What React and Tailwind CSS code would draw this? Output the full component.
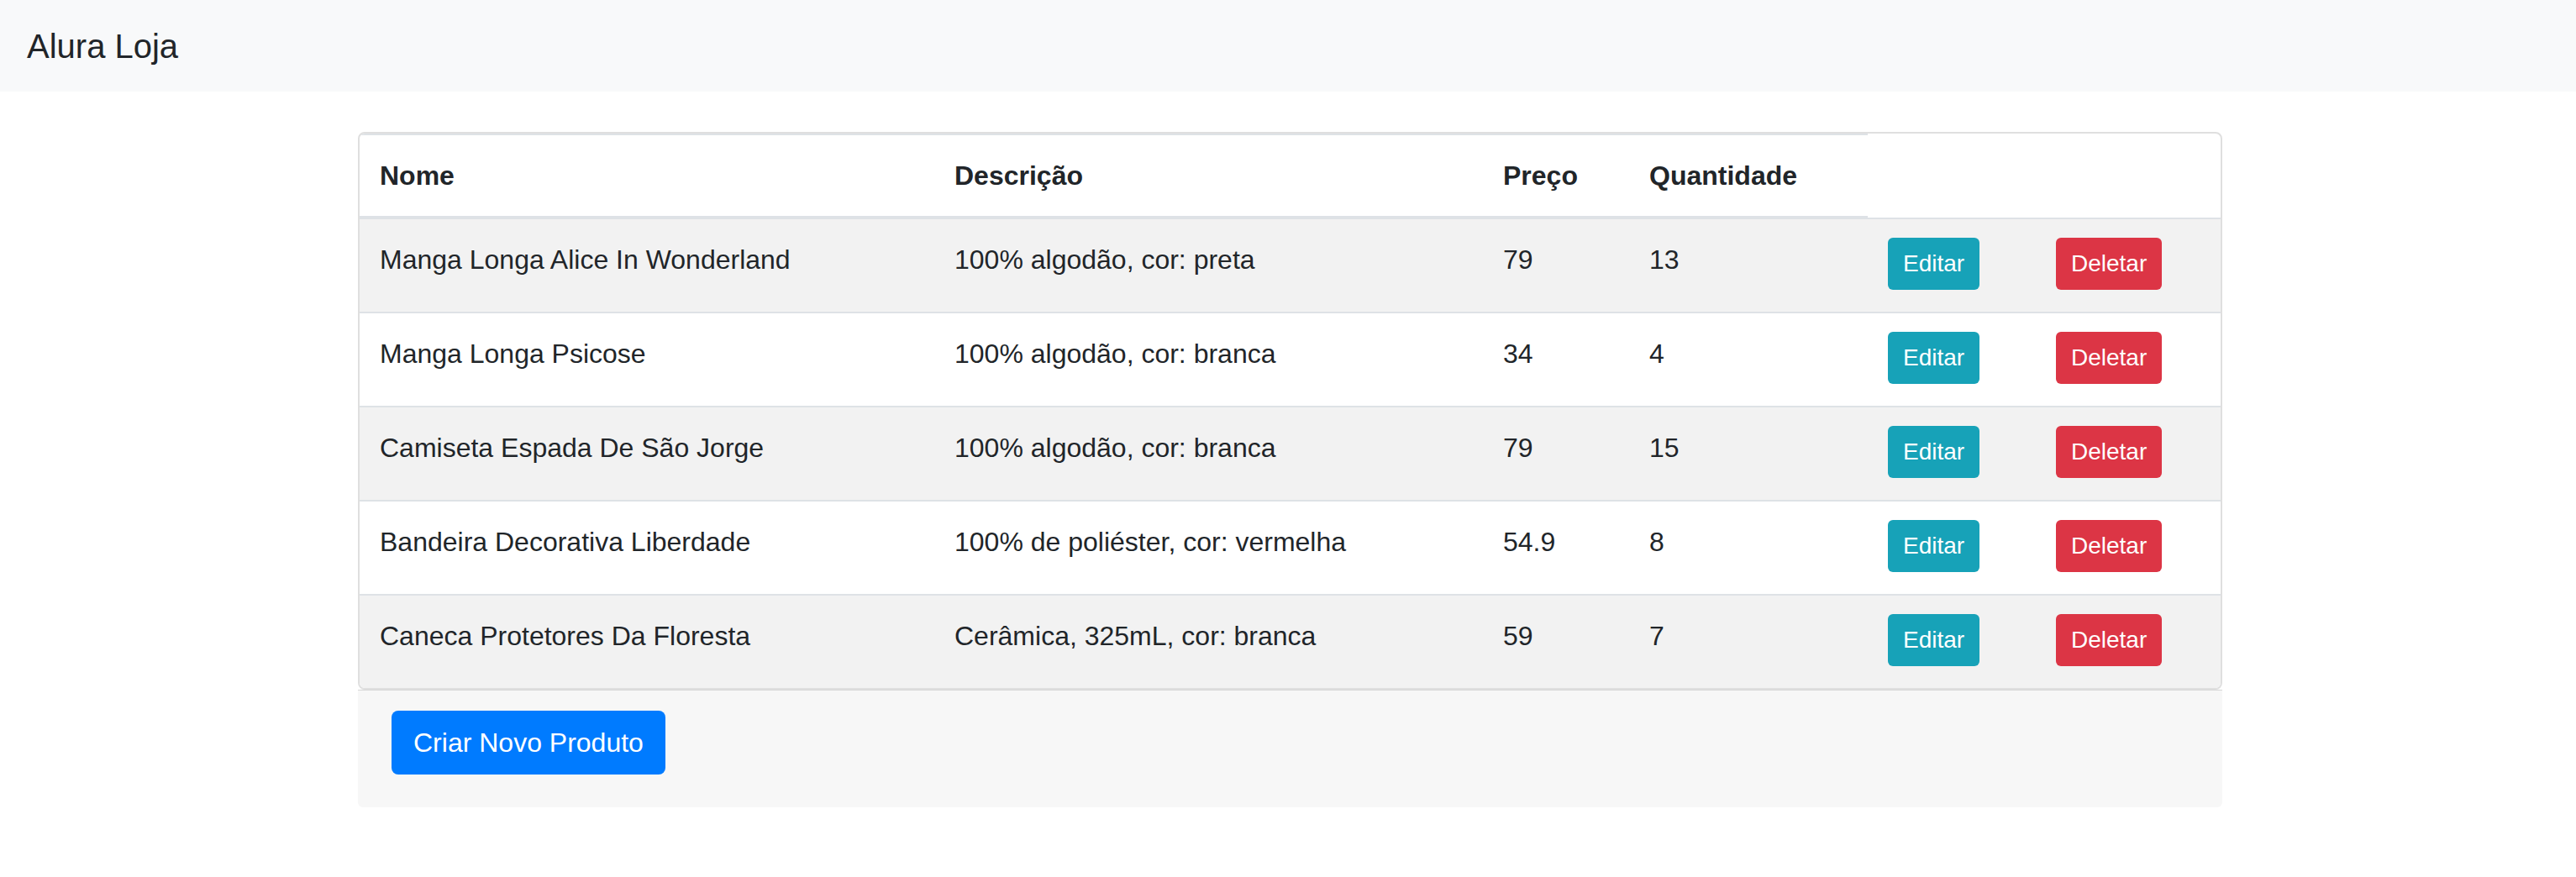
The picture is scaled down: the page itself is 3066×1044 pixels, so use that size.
import React from 'react';

const produtos = [
  { nome: 'Manga Longa Alice In Wonderland', descricao: '100% algodão, cor: preta', preco: '79', quantidade: '13' },
  { nome: 'Manga Longa Psicose', descricao: '100% algodão, cor: branca', preco: '34', quantidade: '4' },
  { nome: 'Camiseta Espada De São Jorge', descricao: '100% algodão, cor: branca', preco: '79', quantidade: '15' },
  { nome: 'Bandeira Decorativa Liberdade', descricao: '100% de poliéster, cor: vermelha', preco: '54.9', quantidade: '8' },
  { nome: 'Caneca Protetores Da Floresta', descricao: 'Cerâmica, 325mL, cor: branca', preco: '59', quantidade: '7' },
];

const cols = 'grid grid-cols-[684px_653px_174px_284px_200px_220px]';

const App = () => {
  return (
    <div className="min-h-screen bg-white text-[#212529] font-['Liberation_Sans',Arial,sans-serif]">
      {/* Navbar */}
      <nav className="h-[109px] bg-[#f8f9fa] flex items-center px-[32px]">
        <span className="text-[40px]">Alura Loja</span>
      </nav>

      <div className="flex justify-center pl-[5px] mt-[48px]">
        <div className="w-[2219px]">
          {/* Tabela */}
          <div className="bg-white border-2 border-[#dfdfdf] rounded-[8px] overflow-hidden text-[32px]">
            <div className={cols}>
              {['Nome', 'Descrição', 'Preço', 'Quantidade'].map((titulo) => (
                <div
                  key={titulo}
                  className="border-t-2 border-b-2 border-[#dee2e6] px-[24px] py-[24px] leading-[48px] font-bold"
                >
                  {titulo}
                </div>
              ))}
              <div />
              <div />
            </div>

            {produtos.map((produto, index) => (
              <div
                key={produto.nome}
                className={`${cols} h-[112px] border-t-2 border-[#dee2e6] ${index % 2 === 0 ? 'bg-[#f2f2f2]' : 'bg-white'}`}
              >
                <div className="px-[24px] pt-[24px] leading-[48px]">{produto.nome}</div>
                <div className="px-[24px] pt-[24px] leading-[48px]">{produto.descricao}</div>
                <div className="px-[24px] pt-[24px] leading-[48px]">{produto.preco}</div>
                <div className="px-[24px] pt-[24px] leading-[48px]">{produto.quantidade}</div>
                <div className="px-[24px] pt-[22px]">
                  <button className="h-[62px] px-[18px] rounded-[6px] bg-[#17a2b8] text-white text-[28px]">
                    Editar
                  </button>
                </div>
                <div className="px-[24px] pt-[22px]">
                  <button className="h-[62px] px-[18px] rounded-[6px] bg-[#dc3545] text-white text-[28px]">
                    Deletar
                  </button>
                </div>
              </div>
            ))}
          </div>

          {/* Rodapé */}
          <div className="bg-[#f7f7f7] border-t border-[#d6d6d6] rounded-b-[6px] pt-[24px] pb-[39px] px-[40px]">
            <button className="h-[76px] px-[26px] rounded-[8px] bg-[#007bff] text-white text-[32px]">
              Criar Novo Produto
            </button>
          </div>
        </div>
      </div>
    </div>
  );
};

export default App;
